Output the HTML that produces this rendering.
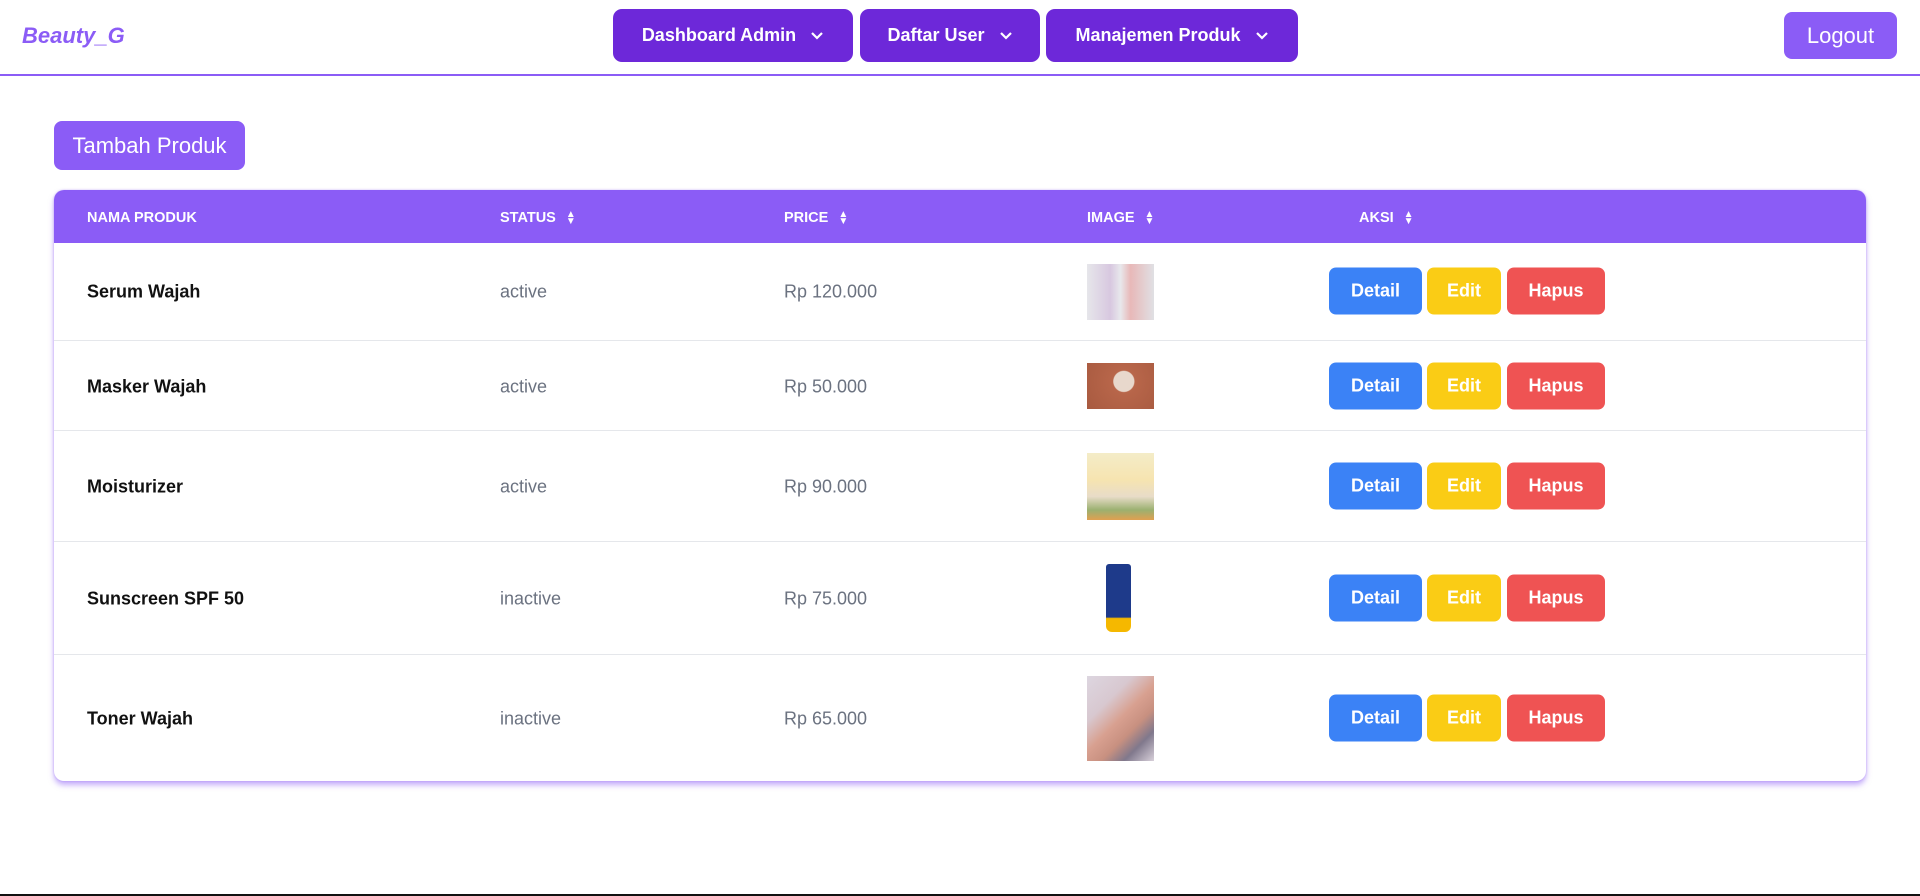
<!DOCTYPE html>
<html><head><meta charset="utf-8"><style>
*{box-sizing:border-box;margin:0;padding:0}
body{width:1920px;height:896px;background:#fff;font-family:"Liberation Sans",sans-serif;position:relative;overflow:hidden}
.nav{position:absolute;left:0;top:0;width:1920px;height:76px;border-bottom:2px solid #8b5cf6}
.logo{position:absolute;left:22px;top:23px;font-size:22px;font-weight:bold;font-style:italic;color:#8b5cf6}
.nb{position:absolute;top:9px;height:53px;background:#6d28d9;color:#fff;border-radius:9px;font-size:18px;font-weight:bold;display:flex;align-items:center;justify-content:center;gap:14px}
.nb svg{width:14px;height:10px}
.logout{position:absolute;left:1784px;top:12px;width:113px;height:47px;background:#8b5cf6;color:#fff;border-radius:8px;font-size:22px;display:flex;align-items:center;justify-content:center}
.add{position:absolute;left:54px;top:121px;width:191px;height:49px;background:#8b5cf6;color:#fff;border-radius:8px;font-size:22px;display:flex;align-items:center;justify-content:center}
.tbl{position:absolute;left:54px;top:190px;width:1812px;height:591px;border-radius:10px;background:#fff;box-shadow:0 4px 6px rgba(139,92,246,.5),0 0 2px rgba(139,92,246,.4);overflow:hidden}
.hd{position:absolute;left:0;top:0;width:100%;height:53px;background:#8b5cf6}
.h{position:absolute;top:20px;color:#fff;font-size:14.5px;font-weight:bold;display:flex;align-items:center;gap:10px}
.row{position:absolute;left:0;width:100%;border-top:1px solid #e5e7eb}
.c{position:absolute;top:50%;transform:translateY(-45%);font-size:18px}
.n{left:33px;font-weight:bold;color:#111}
.s{left:446px;color:#6b7280}
.p{left:730px;color:#6b7280}
.b{position:absolute;top:50%;transform:translateY(-50%);height:47px;border-radius:7px;color:#fff;font-size:18px;font-weight:bold;display:flex;align-items:center;justify-content:center}
.d{left:1275px;width:93px;background:#3b82f6}
.e{left:1373px;width:74px;background:#facc15}
.x{left:1453px;width:98px;background:#ef5353}
.img{position:absolute;left:1033px}
</style></head><body>
<div class="nav">
<div class="logo">Beauty_G</div>
<div class="nb" style="left:613px;width:240px">Dashboard Admin <svg viewBox="0 0 14 10"><path d="M2 2l5 5 5-5" stroke="#fff" stroke-width="2.2" fill="none"/></svg></div>
<div class="nb" style="left:860px;width:180px">Daftar User <svg viewBox="0 0 14 10"><path d="M2 2l5 5 5-5" stroke="#fff" stroke-width="2.2" fill="none"/></svg></div>
<div class="nb" style="left:1046px;width:252px">Manajemen Produk <svg viewBox="0 0 14 10"><path d="M2 2l5 5 5-5" stroke="#fff" stroke-width="2.2" fill="none"/></svg></div>
<div class="logout">Logout</div>
</div>
<div class="add">Tambah Produk</div>
<div class="tbl">
<div class="hd">
<div class="h" style="left:33px">NAMA PRODUK</div>
<div class="h" style="left:446px">STATUS <span style="font-size:10px;line-height:7px">▲<br>▼</span></div>
<div class="h" style="left:730px">PRICE <span style="font-size:10px;line-height:7px">▲<br>▼</span></div>
<div class="h" style="left:1033px">IMAGE <span style="font-size:10px;line-height:7px">▲<br>▼</span></div>
<div class="h" style="left:1305px">AKSI <span style="font-size:10px;line-height:7px">▲<br>▼</span></div>
</div>
<div class="row" style="top:52px;height:98px;border-top:none">
<div class="c n">Serum Wajah</div><div class="c s">active</div><div class="c p">Rp 120.000</div>
<div class="img" style="top:22px;width:67px;height:56px;background:linear-gradient(90deg,#e6e6ea 0%,#d8c8e0 35%,#e8e8ec 50%,#e8b8b8 65%,#e0e0e4 100%)"></div>
<div class="b d">Detail</div><div class="b e">Edit</div><div class="b x">Hapus</div></div>
<div class="row" style="top:150px;height:90px">
<div class="c n">Masker Wajah</div><div class="c s">active</div><div class="c p">Rp 50.000</div>
<div class="img" style="top:22px;width:67px;height:46px;background:radial-gradient(circle at 55% 40%,#e8d8cc 0 22%,#b8664a 24%,#a85a40 100%)"></div>
<div class="b d">Detail</div><div class="b e">Edit</div><div class="b x">Hapus</div></div>
<div class="row" style="top:240px;height:111px">
<div class="c n">Moisturizer</div><div class="c s">active</div><div class="c p">Rp 90.000</div>
<div class="img" style="top:22px;width:67px;height:67px;background:linear-gradient(180deg,#f4ecc8 0%,#f6e4b0 40%,#e8dcc8 65%,#9bb070 85%,#e0a050 100%)"></div>
<div class="b d">Detail</div><div class="b e">Edit</div><div class="b x">Hapus</div></div>
<div class="row" style="top:351px;height:113px">
<div class="c n">Sunscreen SPF 50</div><div class="c s">inactive</div><div class="c p">Rp 75.000</div>
<div class="img" style="left:1052px;top:22px;width:25px;height:68px;background:linear-gradient(180deg,#1e3a8a 0%,#1e3a8a 78%,#f5b800 80%,#f5b800 100%);border-radius:3px 3px 6px 6px"></div>
<div class="b d">Detail</div><div class="b e">Edit</div><div class="b x">Hapus</div></div>
<div class="row" style="top:464px;height:127px">
<div class="c n">Toner Wajah</div><div class="c s">inactive</div><div class="c p">Rp 65.000</div>
<div class="img" style="top:21px;width:67px;height:85px;background:linear-gradient(135deg,#ddd6e0 0%,#d8c8d0 30%,#d8a090 50%,#c89080 65%,#80788c 80%,#d8d0da 100%)"></div>
<div class="b d">Detail</div><div class="b e">Edit</div><div class="b x">Hapus</div></div>
</div>
<div style="position:absolute;left:0;top:894px;width:1920px;height:2px;background:#111"></div>
</body></html>
